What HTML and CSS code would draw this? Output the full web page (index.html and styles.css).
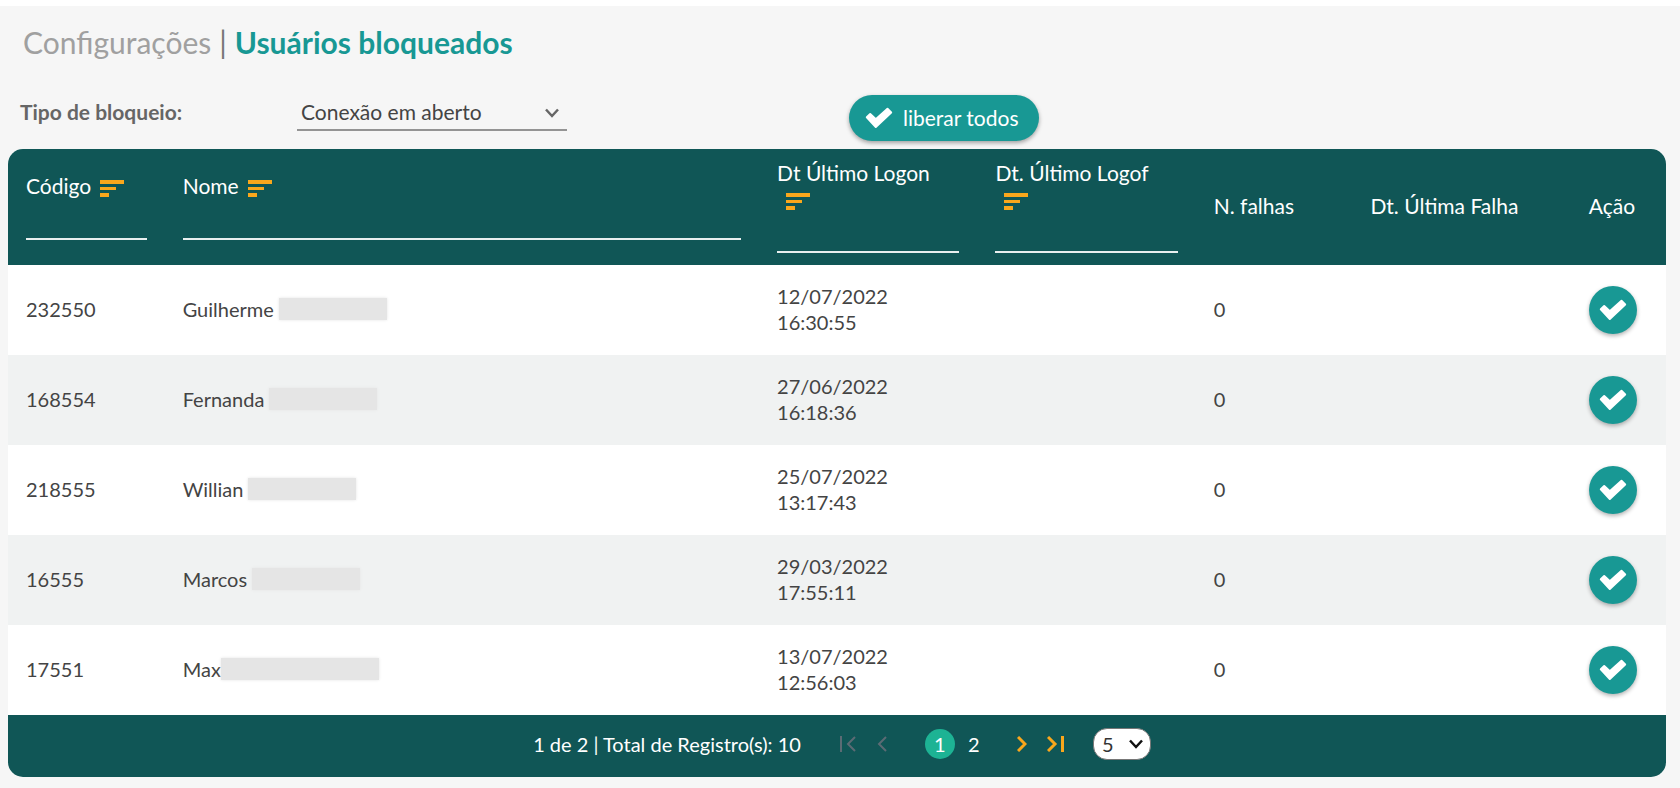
FILE: index.html
```html
<!DOCTYPE html>
<html lang="pt-BR">
<head>
<meta charset="utf-8">
<title>Usuários bloqueados</title>
<link rel="stylesheet" href="styles.css">
</head>
<body>
<svg class="sprite" aria-hidden="true">
  <symbol id="check" viewBox="0 0 28 22"><path d="M1.800 10.300 5.200 7 10.800 12.300 22.500 1.800 26.200 5.400 10.800 20Z" stroke="currentColor" stroke-width="2" stroke-linejoin="round"/></symbol>
  <symbol id="sort" viewBox="0 0 24 17"><path d="M0 0h24v4H0zM0 7h16v3H0zM0 13h9v4H0z"/></symbol>
  <symbol id="chevron" viewBox="0 0 16 10"><path d="M2 1.500 8 8l6-6.500" fill="none" stroke="currentColor" stroke-width="2.500"/></symbol>
  <symbol id="prev" viewBox="0 0 10 16"><path d="M9 1 2 8l7 7" fill="none" stroke="currentColor" stroke-width="2"/></symbol>
  <symbol id="first" viewBox="0 0 18 16"><path d="M2 0v16M16 1 9 8l7 7" fill="none" stroke="currentColor" stroke-width="2"/></symbol>
  <symbol id="next" viewBox="0 0 10 16"><path d="M1 1l7 7-7 7" fill="none" stroke="currentColor" stroke-width="3"/></symbol>
  <symbol id="last" viewBox="0 0 18 16"><path d="M1 1l7 7-7 7M15.500 0v16" fill="none" stroke="currentColor" stroke-width="3"/></symbol>
</svg>
<main class="page">
  <h1 class="title"><span class="title-section">Configurações</span><span class="title-bar">|</span><span class="title-current">Usuários bloqueados</span></h1>
  <div class="filters">
    <label class="filter-label" for="tipo">Tipo de bloqueio:</label>
    <div class="filter-select">
      <select id="tipo"><option>Conexão em aberto</option></select>
      <svg class="chevron"><use href="#chevron"/></svg>
    </div>
    <button class="release-all" type="button"><svg class="check"><use href="#check"/></svg>liberar todos</button>
  </div>
  <section class="card">
    <table class="users">
      <colgroup><col class="c-code"><col class="c-name"><col class="c-date"><col class="c-date"><col class="c-code"><col class="c-date"><col></colgroup>
      <thead>
        <tr>
          <th><label for="f1">Código</label><button class="sort" type="button" aria-label="Ordenar"><svg><use href="#sort"/></svg></button><input id="f1" type="text"></th>
          <th><label for="f2">Nome</label><button class="sort" type="button" aria-label="Ordenar"><svg><use href="#sort"/></svg></button><input id="f2" type="text"></th>
          <th><label class="stacked" for="f3">Dt Último Logon</label><button class="sort" type="button" aria-label="Ordenar"><svg><use href="#sort"/></svg></button><input id="f3" type="text"></th>
          <th><label class="stacked" for="f4">Dt. Último Logof</label><button class="sort" type="button" aria-label="Ordenar"><svg><use href="#sort"/></svg></button><input id="f4" type="text"></th>
          <th>N. falhas</th>
          <th>Dt. Última Falha</th>
          <th>Ação</th>
        </tr>
      </thead>
      <tbody>
        <tr><td>232550</td><td><div class="name">Guilherme<span class="mask"></span></div></td><td>12/07/2022<br>16:30:55</td><td></td><td>0</td><td></td><td><button class="release" type="button" aria-label="Liberar"><svg class="check"><use href="#check"/></svg></button></td></tr>
        <tr><td>168554</td><td><div class="name">Fernanda<span class="mask"></span></div></td><td>27/06/2022<br>16:18:36</td><td></td><td>0</td><td></td><td><button class="release" type="button" aria-label="Liberar"><svg class="check"><use href="#check"/></svg></button></td></tr>
        <tr><td>218555</td><td><div class="name">Willian<span class="mask"></span></div></td><td>25/07/2022<br>13:17:43</td><td></td><td>0</td><td></td><td><button class="release" type="button" aria-label="Liberar"><svg class="check"><use href="#check"/></svg></button></td></tr>
        <tr><td>16555</td><td><div class="name">Marcos<span class="mask"></span></div></td><td>29/03/2022<br>17:55:11</td><td></td><td>0</td><td></td><td><button class="release" type="button" aria-label="Liberar"><svg class="check"><use href="#check"/></svg></button></td></tr>
        <tr><td>17551</td><td><div class="name name-tight">Max<span class="mask mask-wide"></span></div></td><td>13/07/2022<br>12:56:03</td><td></td><td>0</td><td></td><td><button class="release" type="button" aria-label="Liberar"><svg class="check"><use href="#check"/></svg></button></td></tr>
      </tbody>
    </table>
    <nav class="pager">
      <span class="summary">1 de 2 | Total de Registro(s): 10</span>
      <div class="steps steps-back">
        <button type="button" disabled aria-label="Primeira"><svg class="edge"><use href="#first"/></svg></button>
        <button type="button" disabled aria-label="Anterior"><svg class="arrow"><use href="#prev"/></svg></button>
      </div>
      <div class="pages">
        <button class="current" type="button">1</button>
        <button type="button">2</button>
      </div>
      <div class="steps">
        <button type="button" aria-label="Próxima"><svg class="arrow"><use href="#next"/></svg></button>
        <button type="button" aria-label="Última"><svg class="edge"><use href="#last"/></svg></button>
      </div>
      <div class="page-size">
        <select aria-label="Registros por página"><option>5</option></select>
        <svg class="chevron"><use href="#chevron"/></svg>
      </div>
    </nav>
  </section>
</main>
</body>
</html>
```
FILE: styles.css
```css
* { box-sizing: border-box; }
body {
  margin: 0;
  min-height: 100vh;
  background: #f6f6f6;
  border-top: 6px solid #fff;
  color: #444;
  font: 20px/26px Lato, "Noto Sans", sans-serif;
}
button, select, input { font: inherit; color: inherit; }
button { border: 0; padding: 0; background: none; cursor: pointer; }
svg { display: block; fill: currentColor; }
.sprite { position: absolute; width: 0; height: 0; }
.page { padding: 17px 14px 11px 8px; }

.title {
  display: flex;
  gap: 8px;
  margin: 0;
  padding-left: 15px;
  font-size: 30px;
  line-height: 38px;
  font-weight: 400;
}
.title-section { color: #a0a0a0; }
.title-bar { color: #777; }
.title-current { color: #189894; font-weight: 700; }

.filters {
  display: flex;
  align-items: flex-start;
  padding: 34px 0 8px 12px;
  font-size: 21px;
}
.filter-label { width: 277px; padding-top: 4px; font-weight: 700; color: #666; }
.filter-select { position: relative; width: 270px; border-bottom: 2px solid #949494; }
.filter-select select {
  appearance: none;
  width: 100%;
  height: 34px;
  padding: 0 40px 0 4px;
  border: 0;
  background: none;
}
.chevron { position: absolute; pointer-events: none; width: 16px; height: 10px; }
.filter-select .chevron { right: 7px; top: 13px; color: #666; }
.release-all {
  display: flex;
  align-items: center;
  gap: 10px;
  height: 46px;
  margin-left: 282px;
  padding: 0 21px 0 16px;
  border-radius: 23px;
  background: #189894;
  color: #fff;
  box-shadow: 0 2px 4px rgba(0, 0, 0, .35);
}
.check { width: 28px; height: 22px; }

.card { border-radius: 15px; overflow: hidden; background: #fff; }
.users { width: 100%; table-layout: fixed; border-collapse: collapse; }
.c-code { width: 9.45%; }
.c-name { width: 35.85%; }
.c-date { width: 13.17%; }
.users thead { background: #105656; color: #fff; font-size: 21px; }
.users th { height: 116px; padding: 0 18px 2px; text-align: left; font-weight: 400; white-space: nowrap; }
.users th label { margin-right: 9px; }
.users th .stacked { display: block; margin: 0; }
.stacked + .sort { margin-left: 9px; }
.sort { color: #faa71c; vertical-align: middle; }
.sort svg { width: 24px; height: 17px; }
.users th input {
  display: block;
  width: 100%;
  height: 41px;
  padding: 0;
  border: 0;
  border-bottom: 2px solid #e8efef;
  background: none;
}
.users td { height: 90px; padding: 0 18px 3px; }
.users td:last-child { padding-bottom: 0; }
.users tbody tr:nth-child(even) { background: #f0f2f2; }
.name { display: flex; align-items: center; gap: 5px; }
.name-tight { gap: 0; }
.mask { width: 108px; height: 22px; background: #e5e5e5; box-shadow: 0 0 3px #e5e5e5; }
.mask-wide { width: 158px; }
.release {
  display: flex;
  align-items: center;
  justify-content: center;
  width: 48px;
  height: 48px;
  border-radius: 50%;
  background: #189894;
  color: #fff;
  box-shadow: 0 2px 4px rgba(0, 0, 0, .3);
}

.pager {
  display: flex;
  align-items: center;
  justify-content: center;
  gap: 28px;
  height: 62px;
  padding: 0 0 4px 10px;
  background: #105656;
  color: #fff;
}
.summary, .steps-back { margin-right: 10px; }
.steps { display: flex; align-items: center; gap: 20px; color: #faa71c; }
.steps button:disabled { color: #5b6b74; }
.edge { width: 18px; height: 16px; }
.arrow { width: 10px; height: 16px; }
.pages { display: flex; gap: 4px; }
.pages button { width: 30px; height: 30px; border-radius: 50%; }
.pages .current { background: #1db394; }
.page-size { position: relative; }
.page-size select {
  appearance: none;
  display: block;
  width: 58px;
  height: 32px;
  padding: 0 8px;
  border: 1px solid #777;
  border-radius: 14px;
  background: #fff;
  color: #333;
}
.page-size .chevron { right: 7px; top: 11px; color: #111; }
```
